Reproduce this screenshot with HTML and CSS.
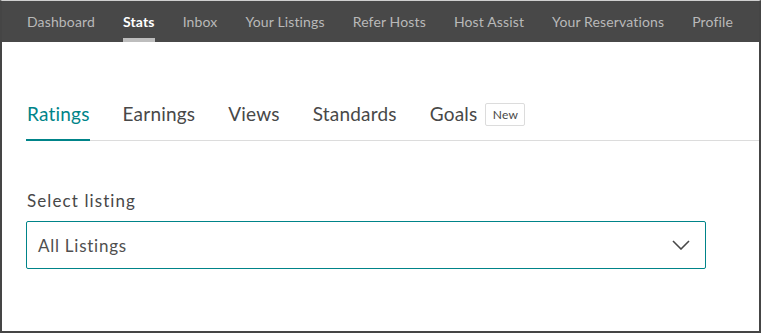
FILE: index.html
```html
<!DOCTYPE html>
<html>
<head>
<meta charset="utf-8">
<link rel="stylesheet" href="styles.css">
</head>
<body>
<div class="screen">
  <nav class="topnav">
    <a class="nav-item"><span>Dashboard</span></a>
    <a class="nav-item active"><span>Stats</span></a>
    <a class="nav-item"><span>Inbox</span></a>
    <a class="nav-item"><span>Your Listings</span></a>
    <a class="nav-item"><span>Refer Hosts</span></a>
    <a class="nav-item"><span>Host Assist</span></a>
    <a class="nav-item"><span>Your Reservations</span></a>
    <a class="nav-item"><span>Profile</span></a>
  </nav>
  <main class="content">
    <div class="tabs">
      <a class="tab active">Ratings</a>
      <a class="tab">Earnings</a>
      <a class="tab">Views</a>
      <a class="tab">Standards</a>
      <a class="tab">Goals <span class="badge">New</span></a>
    </div>
    <div class="field">
      <label class="field-label">Select listing</label>
      <div class="select">
        <span class="select-value">All Listings</span>
        <svg class="chevron" width="18" height="10" viewBox="0 0 18 10"><path d="M1 1 L9 9 L17 1" fill="none" stroke="#484848" stroke-width="1.6"/></svg>
      </div>
    </div>
  </main>
</div>
</body>
</html>
```

FILE: styles.css
```css
html, body {
  margin: 0;
  padding: 0;
  background: #fff;
}
body {
  font-family: Lato, "Open Sans", sans-serif;
  color: #484848;
}
.screen {
  width: 761px;
  height: 333px;
  box-sizing: border-box;
  border-top: 1px solid #cfcfcf;
  border-left: 2px solid #454545;
  border-right: 2px solid #454545;
  border-bottom: 2px solid #454545;
  display: flex;
  flex-direction: column;
  overflow: hidden;
}
.topnav {
  height: 41px;
  background: #484848;
  display: flex;
  align-items: stretch;
  padding-left: 11px;
}
.nav-item {
  padding: 0 14px;
  display: flex;
  align-items: center;
  font-size: 14px;
  letter-spacing: 0.14px;
  color: #b9b9b9;
}
.nav-item span {
  position: relative;
  height: 100%;
  display: flex;
  align-items: center;
}
.nav-item.active {
  color: #fff;
  font-weight: bold;
}
.nav-item.active span::after {
  content: "";
  position: absolute;
  left: 0;
  right: 0;
  bottom: 0;
  height: 4px;
  background: #bdbdbd;
}
.content {
  flex: 1;
  padding-left: 24px;
}
.tabs {
  margin-top: 56px;
  display: flex;
  align-items: stretch;
  border-bottom: 1px solid #dcdcdc;
  height: 43px;
  box-sizing: border-box;
}
.tab {
  margin-right: 33px;
  font-size: 19px;
  letter-spacing: 0.2px;
  color: #484848;
  display: flex;
  align-items: flex-start;
  padding: 5px 0 0;
  box-sizing: border-box;
  line-height: 22px;
}
.tab.active {
  color: #008489;
  border-bottom: 2px solid #008489;
  margin-bottom: -1px;
  padding-left: 1px;
}
.badge {
  margin-left: 8px;
  margin-top: 0;
  height: 23px;
  width: 40px;
  box-sizing: border-box;
  border: 1px solid #dcdcdc;
  border-radius: 2px;
  font-size: 12px;
  letter-spacing: 0.2px;
  display: flex;
  align-items: center;
  justify-content: center;
}
.field {
  margin-top: 49px;
  width: 680px;
}
.field-label {
  display: block;
  font-size: 17px;
  letter-spacing: 1.1px;
  line-height: 22px;
  margin-bottom: 9px;
  padding-left: 1px;
}
.select {
  height: 48px;
  box-sizing: border-box;
  border: 1px solid #008489;
  border-radius: 2px;
  display: flex;
  align-items: center;
  padding: 0 15px 0 11px;
  justify-content: space-between;
}
.select-value {
  font-size: 17px;
  letter-spacing: 0.75px;
  color: #4f4f4f;
}
```
